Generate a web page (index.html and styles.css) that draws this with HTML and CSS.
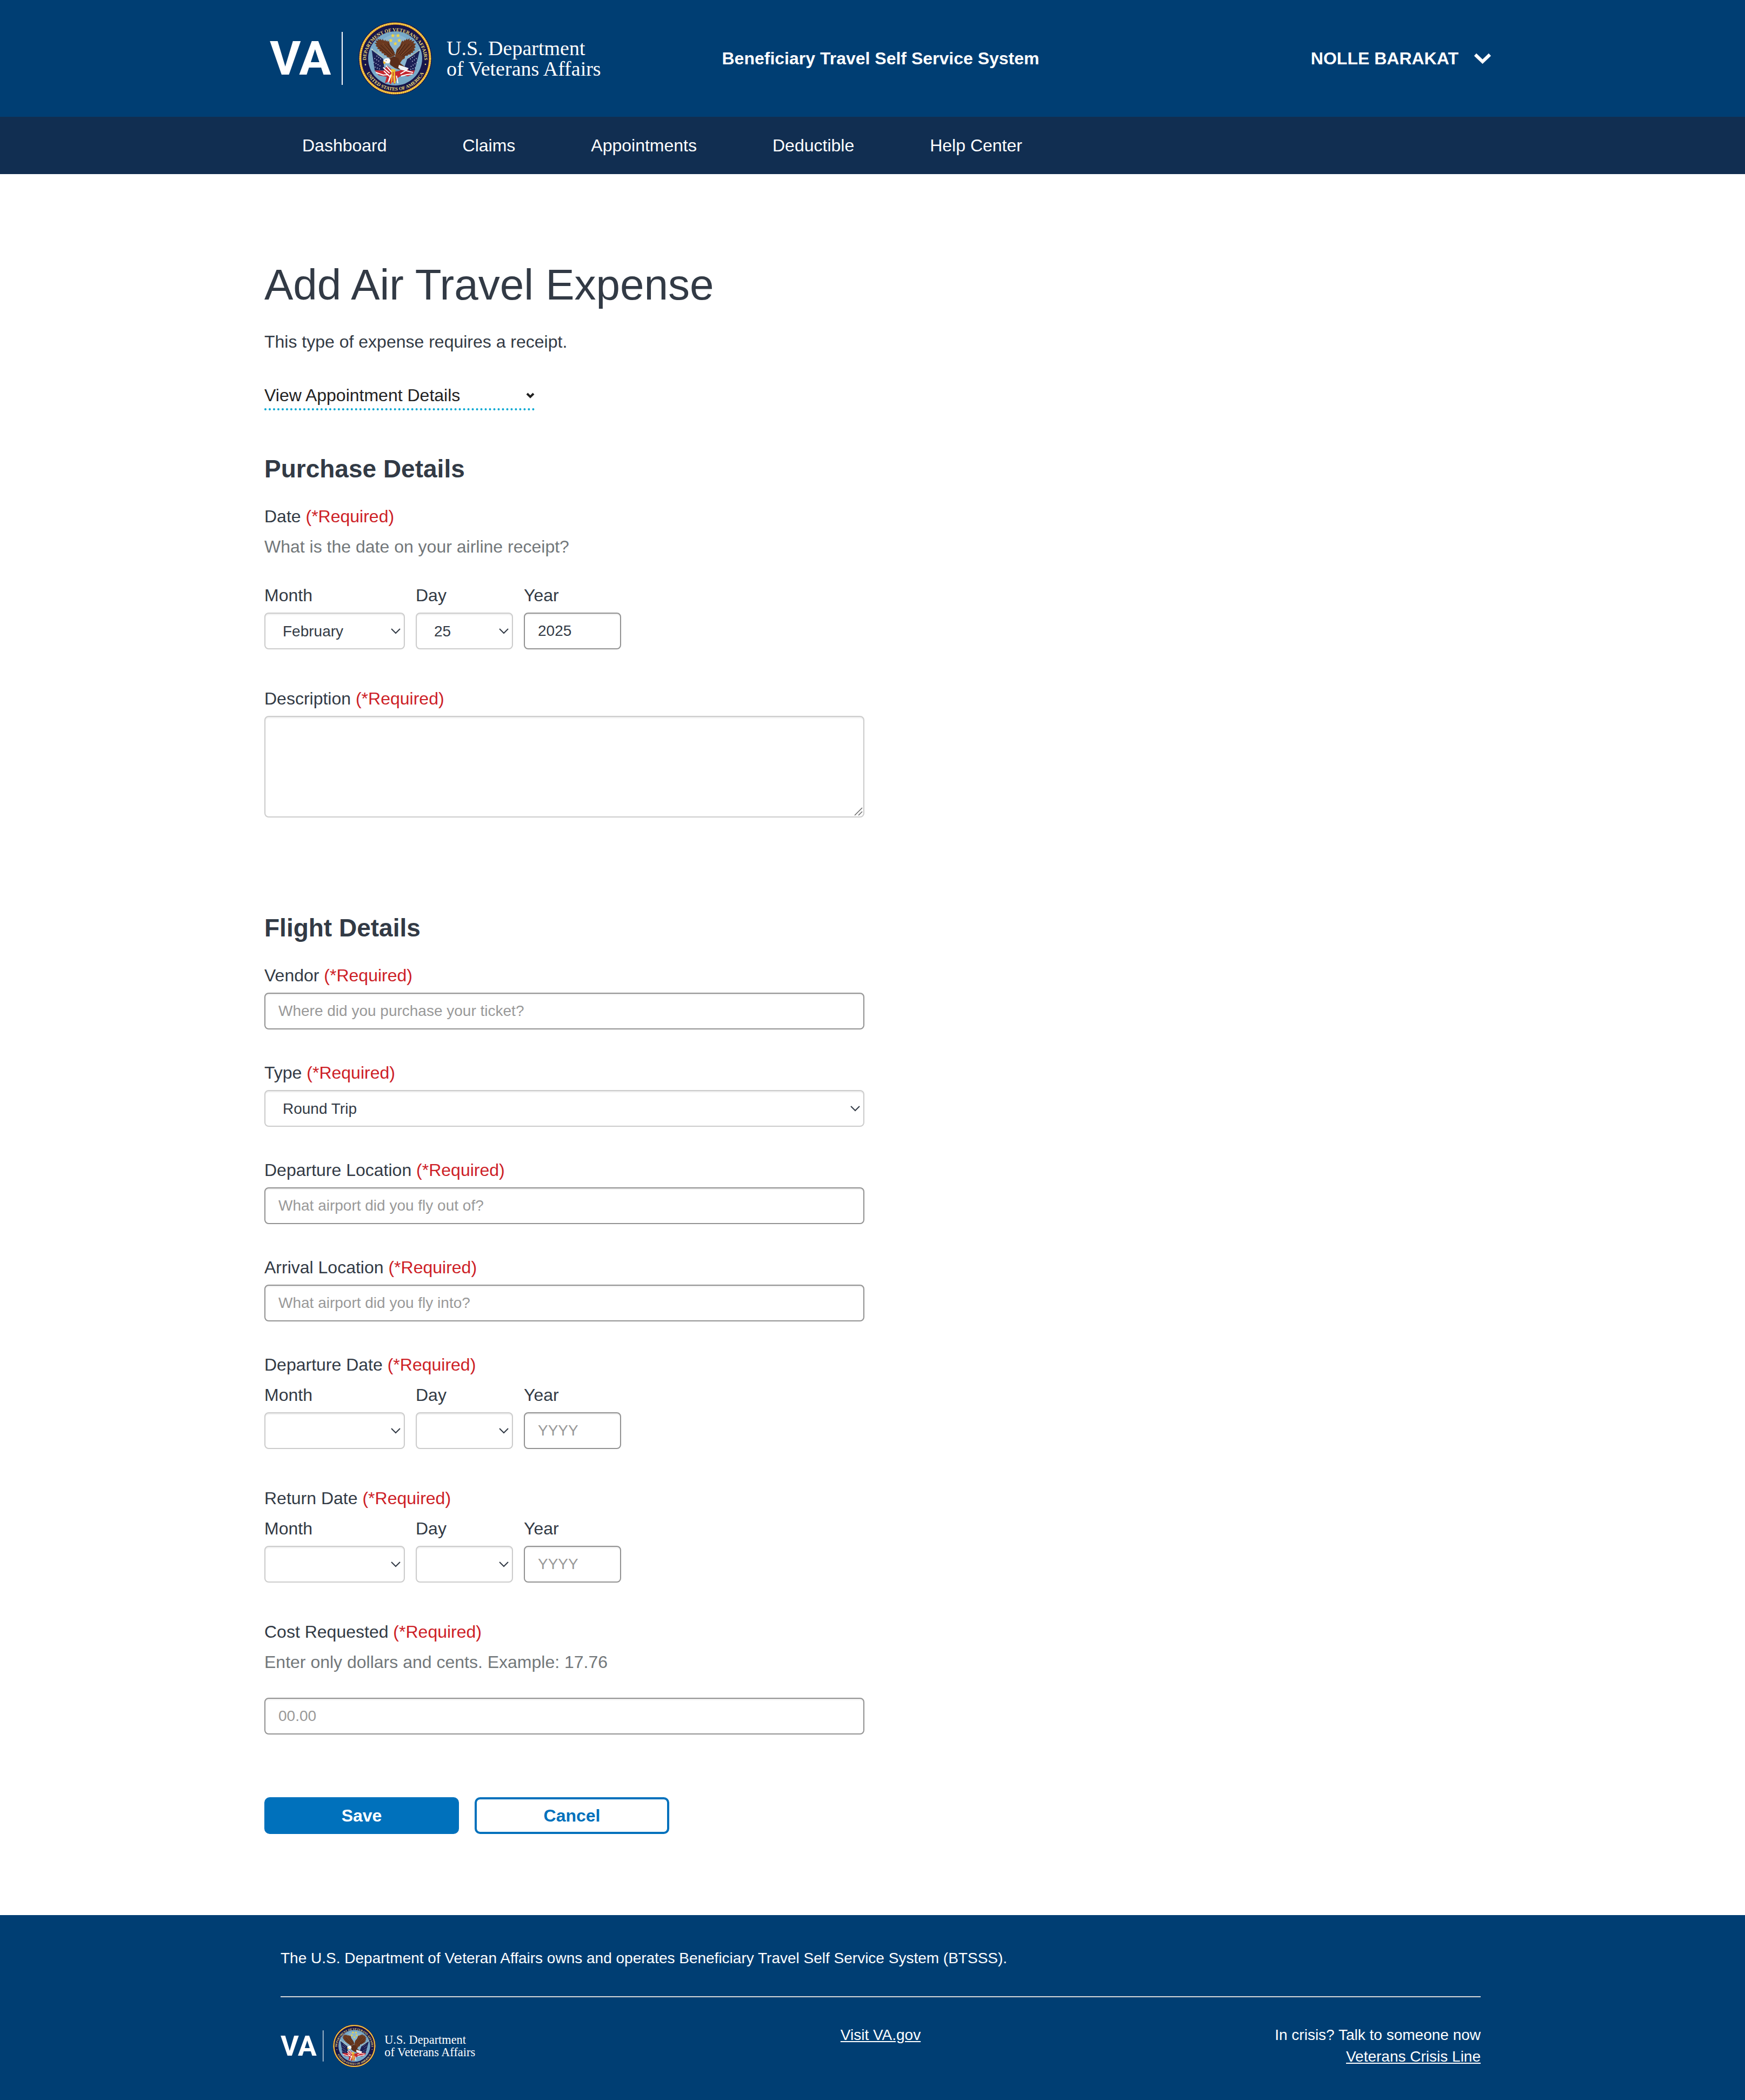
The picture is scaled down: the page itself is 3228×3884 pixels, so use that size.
FILE: index.html
```html
<!DOCTYPE html>
<html lang="en">
<head>
<meta charset="utf-8">
<meta name="viewport" content="width=device-width, initial-scale=1">
<title>Add Air Travel Expense</title>
<link rel="stylesheet" href="styles.css">
</head>
<body>
<header>
  <div class="masthead">
    <div class="container masthead-row">
      <a href="#" class="brand" aria-label="U.S. Department of Veterans Affairs">
        <svg class="logo" viewBox="0 0 614 136">
          <text class="logo-va" x="0" y="98">VA</text>
          <rect x="133" y="19" width="2" height="98" fill="#fff"/>
          <svg x="164" y="0" width="136" height="136" viewBox="69 60 408 408">
            <g id="seal">
              <circle cx="273" cy="264" r="203" fill="#17154a"/>
              <circle cx="273" cy="264" r="193" fill="none" stroke="#c4742a" stroke-width="12"/>
              <circle cx="273" cy="264" r="194" fill="none" stroke="#f6cf45" stroke-width="10" stroke-dasharray="9 2"/>
              <circle cx="273" cy="264" r="150" fill="#78a9c8"/>
              <circle cx="273" cy="230" r="98" fill="#9cc4d8" opacity=".5"/>
              <path id="ring-top" d="M111 276 A162 162 0 1 1 435 276" fill="none"/>
              <path id="ring-bottom" d="M94 264 A179 179 0 0 0 452 264" fill="none"/>
              <g fill="#e9da78" font-family="'Liberation Serif', serif" font-weight="700" font-size="27" text-anchor="middle">
                <text><textPath href="#ring-top" startOffset="50%">DEPARTMENT OF VETERANS AFFAIRS</textPath></text>
                <text><textPath href="#ring-bottom" startOffset="50%">UNITED STATES OF AMERICA</textPath></text>
              </g>
              <circle cx="108" cy="299" r="4" fill="#e3d372"/>
              <circle cx="441" cy="297" r="4" fill="#e3d372"/>
              <g fill="#f4d63f">
                <path id="star" d="M260 125l3 8h9l-7 6 3 9-8-5-8 5 3-9-7-6h9z"/>
                <use href="#star" x="29"/><use href="#star" x="-11" y="27"/><use href="#star" x="36" y="27"/><use href="#star" x="14" y="45"/>
              </g>
              <!-- flags -->
              <path d="M143 218L206 266 214 330 160 332z" fill="#1c2156"/>
              <path d="M410 218L340 268 318 330 380 336z" fill="#1c2156"/>
              <path d="M146 214L208 262M408 218L346 262" stroke="#d8cfa0" stroke-width="3"/>
              <path d="M139 210l9 2-2 8z M412 214l-8 4 4 6z" fill="#f3efe0"/>
              <path d="M158 264l26 16M154 284l38 24M160 312l30 12M170 250l24 18M392 264l-26 18M396 286l-40 26M386 316l-30 10M380 250l-24 18" stroke="#dfe4f2" stroke-width="5" stroke-dasharray="4 9"/>
              <path d="M160 330l48 2 20-28 40 34 26-4 38-20 20 18 30-2-8 20-30 14-34-6-26 16-14 34-12-14-10 14-12-16-20 10 10-36-44-8z" fill="#c4262f"/>
              <path d="M166 342l40 14 30-2M206 314l36 32M222 304l34 38M210 334l32 30M234 396l14-40M288 402l-8-42M302 350l30-18 40 10M306 362l32-8 32-4M252 352l-14 40M268 400l-2-40" stroke="#fff" stroke-width="6" fill="none"/>
              <!-- eagle -->
              <path d="M274 246L262 215 244 190 238 166 232 172 228 163 224 170 217 160 213 168 203 156 200 164 187 154 188 162 173 154 179 166 163 164 172 178 158 177 170 190 164 194 178 204 172 209 188 216 184 222 200 228 196 234 212 238 210 245 226 248 226 256 244 262z" fill="#6b3920"/>
              <path d="M273 248L282 214 300 194 309 170 316 164 318 172 326 160 328 166 339 154 340 162 354 152 352 164 369 158 363 170 380 166 374 180 389 182 380 194 387 202 377 210 384 218 371 224 374 232 360 234 360 242 346 242 342 250 328 250 326 264 312 272 300 290 276 300z" fill="#6b3920"/>
              <path d="M262 240L212 186M252 246L192 190M242 250L184 202M270 234L232 182M290 240L330 184M300 246L352 184M308 250L370 192M282 234L312 186M314 256L366 218" stroke="#3c1f12" stroke-width="3"/>
              <path d="M256 244L204 180M286 236L320 184M306 246L360 192" stroke="#9a6238" stroke-width="2"/>
              <path d="M238 266L266 252 292 264 300 290 332 314 296 326 272 318 246 300z" fill="#5a2d1a"/>
              <path d="M294 300l54 18-12 16-30-6-16-12z" fill="#eef1f5"/>
              <path d="M208 276q6-14 22-13 12 1 17 10l-3 14q-12 8-22 2l-10 2z" fill="#fbfbf7"/>
              <path d="M206 280l14 5-2 6-6 7q-8-8-6-18z" fill="#efb72b"/>
              <circle cx="223" cy="276" r="2" fill="#222"/>
              <path d="M246 328l14-6 16 6-4 10-16 2zM252 338h8l-2 50-8 18zM264 338h8l4 62-10 4z" fill="#efc12e"/>
            </g>
          </svg>
          <text class="logo-name" x="327" y="62">U.S. Department</text>
          <text class="logo-name" x="327" y="100">of Veterans Affairs</text>
        </svg>
      </a>
      <div class="system-name">Beneficiary Travel Self Service System</div>
      <button type="button" class="user-menu">NOLLE BARAKAT
        <svg width="33" height="20" viewBox="0 0 33 20"><path d="M3 3L16.500 16 30 3" fill="none" stroke="#fff" stroke-width="6"/></svg>
      </button>
    </div>
  </div>
  <nav class="mainnav">
    <div class="container nav-row">
      <a href="#">Dashboard</a><a href="#">Claims</a><a href="#">Appointments</a><a href="#">Deductible</a><a href="#">Help Center</a>
    </div>
  </nav>
</header>

<main class="container content">
  <h1>Add Air Travel Expense</h1>
  <p class="intro">This type of expense requires a receipt.</p>
  <button type="button" class="disclosure">View Appointment Details
    <svg width="16" height="11" viewBox="0 0 16 11"><path d="M2 2L8 8 14 2" fill="none" stroke="#212121" stroke-width="4"/></svg>
  </button>

  <form>
    <section class="purchase">
      <h2>Purchase Details</h2>
      <div class="date-group" role="group" aria-labelledby="date-label">
        <div class="label" id="date-label">Date <span class="req">(*Required)</span></div>
        <p class="hint">What is the date on your airline receipt?</p>
        <div class="date-row after-hint">
          <div class="month"><label for="m1">Month</label><select id="m1"><option>February</option></select></div>
          <div class="day"><label for="d1">Day</label><select id="d1"><option>25</option></select></div>
          <div class="year"><label for="y1">Year</label><input id="y1" type="text" value="2025"></div>
        </div>
      </div>
      <div class="field">
        <label for="description">Description <span class="req">(*Required)</span></label>
        <textarea id="description"></textarea>
      </div>
    </section>

    <section>
      <h2>Flight Details</h2>
      <div class="field">
        <label for="vendor">Vendor <span class="req">(*Required)</span></label>
        <input id="vendor" type="text" placeholder="Where did you purchase your ticket?">
      </div>
      <div class="field">
        <label for="type">Type <span class="req">(*Required)</span></label>
        <select id="type"><option>Round Trip</option></select>
      </div>
      <div class="field">
        <label for="departure">Departure Location <span class="req">(*Required)</span></label>
        <input id="departure" type="text" placeholder="What airport did you fly out of?">
      </div>
      <div class="field">
        <label for="arrival">Arrival Location <span class="req">(*Required)</span></label>
        <input id="arrival" type="text" placeholder="What airport did you fly into?">
      </div>
      <div class="date-group" role="group" aria-labelledby="dep-label">
        <div class="label" id="dep-label">Departure Date <span class="req">(*Required)</span></div>
        <div class="date-row">
          <div class="month"><label for="m2">Month</label><select id="m2"><option></option></select></div>
          <div class="day"><label for="d2">Day</label><select id="d2"><option></option></select></div>
          <div class="year"><label for="y2">Year</label><input id="y2" type="text" placeholder="YYYY"></div>
        </div>
      </div>
      <div class="date-group" role="group" aria-labelledby="ret-label">
        <div class="label" id="ret-label">Return Date <span class="req">(*Required)</span></div>
        <div class="date-row">
          <div class="month"><label for="m3">Month</label><select id="m3"><option></option></select></div>
          <div class="day"><label for="d3">Day</label><select id="d3"><option></option></select></div>
          <div class="year"><label for="y3">Year</label><input id="y3" type="text" placeholder="YYYY"></div>
        </div>
      </div>
      <div class="field cost">
        <label for="cost">Cost Requested <span class="req">(*Required)</span></label>
        <p class="hint">Enter only dollars and cents. Example: 17.76</p>
        <input id="cost" type="text" placeholder="00.00">
      </div>
    </section>

    <div class="actions">
      <button type="submit" class="btn btn-primary">Save</button>
      <button type="button" class="btn btn-outline">Cancel</button>
    </div>
  </form>
</main>

<footer>
  <div class="container footer-inner">
    <p class="ownership">The U.S. Department of Veteran Affairs owns and operates Beneficiary Travel Self Service System (BTSSS).</p>
    <div class="footer-row">
      <a href="#" class="brand" aria-label="U.S. Department of Veterans Affairs">
        <svg class="logo logo-small" viewBox="0 0 614 136">
          <text class="logo-va" x="0" y="98">VA</text>
          <rect x="133" y="19" width="2" height="98" fill="#fff"/>
          <svg x="164" y="0" width="136" height="136" viewBox="69 60 408 408"><use href="#seal"/></svg>
          <text class="logo-name" x="327" y="62">U.S. Department</text>
          <text class="logo-name" x="327" y="100">of Veterans Affairs</text>
        </svg>
      </a>
      <a href="#">Visit VA.gov</a>
      <div class="crisis">In crisis? Talk to someone now<br><a href="#">Veterans Crisis Line</a></div>
    </div>
  </div>
</footer>
</body>
</html>
```

FILE: styles.css
```css
* {
  box-sizing: border-box;
}

body {
  margin: 0;
  background: #fff;
  color: #323a45;
  font: 32px/40px "Liberation Sans", Arial, sans-serif;
}

h1, h2, p {
  margin: 0;
}

button, input, select, textarea {
  font-family: inherit;
}

.container {
  max-width: 2310px;
  margin: 0 auto;
  padding: 0 30px;
}

/* Header */
.masthead {
  background: #003e73;
  color: #fff;
}

.masthead-row {
  display: grid;
  grid-template-columns: 1fr auto 1fr;
  align-items: center;
  padding: 40px 10px 40px 40px;
}

.brand {
  display: block;
}

.logo {
  display: block;
  width: 614px;
  height: 136px;
}

.logo-small {
  width: 361px;
  height: 80px;
}

.logo-va {
  fill: #fff;
  font: 700 88px Roboto, "Liberation Sans", sans-serif;
}

.logo-name {
  fill: #fff;
  font: 38px "Liberation Serif", "Times New Roman", serif;
}

.system-name {
  font-weight: 700;
}

.user-menu {
  display: flex;
  align-items: center;
  justify-self: end;
  gap: 28px;
  padding: 0;
  border: 0;
  background: none;
  color: #fff;
  font-size: 32px;
  font-weight: 700;
  line-height: 40px;
}

.mainnav {
  background: #112e51;
}

.nav-row {
  display: flex;
}

.nav-row a {
  padding: 33px 70px;
  color: #fff;
  text-decoration: none;
}

/* Page content */
.content {
  padding-top: 160px;
  padding-bottom: 150px;
}

h1 {
  margin-bottom: 40px;
  font-size: 80px;
  font-weight: 400;
  line-height: 90px;
}

h2 {
  margin-bottom: 40px;
  font-size: 46px;
  font-weight: 700;
  line-height: 56px;
}

.disclosure {
  display: flex;
  align-items: center;
  justify-content: space-between;
  width: 500px;
  margin: 59px 0 80px;
  padding: 0 0 4px;
  border: 0;
  border-bottom: 4px dotted #00a6d2;
  background: none;
  color: #212121;
  font-size: 32px;
  line-height: 40px;
}

.purchase {
  margin-bottom: 176px;
}

label, .label {
  display: block;
}

.req {
  color: #cd2026;
}

.hint {
  margin-top: 16px;
  color: #72777a;
}

.field {
  max-width: 1110px;
}

.field + .field, .field + .date-group {
  margin-top: 60px;
}

.date-group + .date-group, .date-group + .field {
  margin-top: 71px;
}

.date-row {
  display: flex;
  gap: 20px;
  margin-top: 16px;
}

.date-row.after-hint {
  margin-top: 50px;
}

.month {
  width: 260px;
}

.day, .year {
  width: 180px;
}

input, select, textarea {
  display: block;
  width: 100%;
  height: 68px;
  margin: 12px 0 0;
  padding: 0 24px;
  border: 2px solid #929292;
  border-radius: 8px;
  background-color: #fff;
  box-shadow: inset 0 2px 2px rgba(0, 0, 0, 0.075);
  color: #323a45;
  font-size: 28px;
}

select {
  appearance: none;
  padding: 0 32px;
  border-color: #ccc;
  background-image: url("data:image/svg+xml,%3Csvg xmlns='http://www.w3.org/2000/svg' width='18' height='12' viewBox='0 0 18 12'%3E%3Cpath d='M1 2l8 8 8-8' fill='none' stroke='%23323a45' stroke-width='2'/%3E%3C/svg%3E");
  background-repeat: no-repeat;
  background-position: right 6px center;
}

textarea {
  height: 188px;
  padding: 12px 24px;
  border-color: #ccc;
  background-image: url("data:image/svg+xml,%3Csvg xmlns='http://www.w3.org/2000/svg' width='16' height='16' viewBox='0 0 16 16'%3E%3Cpath d='M1 15L15 1M8 15l7-7' stroke='%23666' stroke-width='1.500'/%3E%3C/svg%3E");
  background-repeat: no-repeat;
  background-position: right 1px bottom 1px;
  resize: vertical;
}

textarea::-webkit-resizer {
  background: transparent;
}

::placeholder {
  color: #999;
  opacity: 1;
}

.cost input {
  margin-top: 46px;
}

.actions {
  display: flex;
  gap: 29px;
  margin-top: 116px;
}

.btn {
  width: 360px;
  height: 68px;
  border: 4px solid #0071bc;
  border-radius: 10px;
  font-size: 32px;
  font-weight: 700;
}

.btn-primary {
  background: #0071bc;
  color: #fff;
}

.btn-outline {
  background: #fff;
  color: #0071bc;
}

/* Footer */
footer {
  background: #003e73;
  color: #fff;
  font-size: 28px;
}

.footer-inner {
  padding: 60px 30px 60px 60px;
}

.ownership {
  padding-bottom: 50px;
  border-bottom: 2px solid #d6d7d9;
}

.footer-row {
  display: grid;
  grid-template-columns: 1fr auto 1fr;
  padding-top: 50px;
}

.footer-row a {
  color: #fff;
}

.crisis {
  text-align: right;
}
```
